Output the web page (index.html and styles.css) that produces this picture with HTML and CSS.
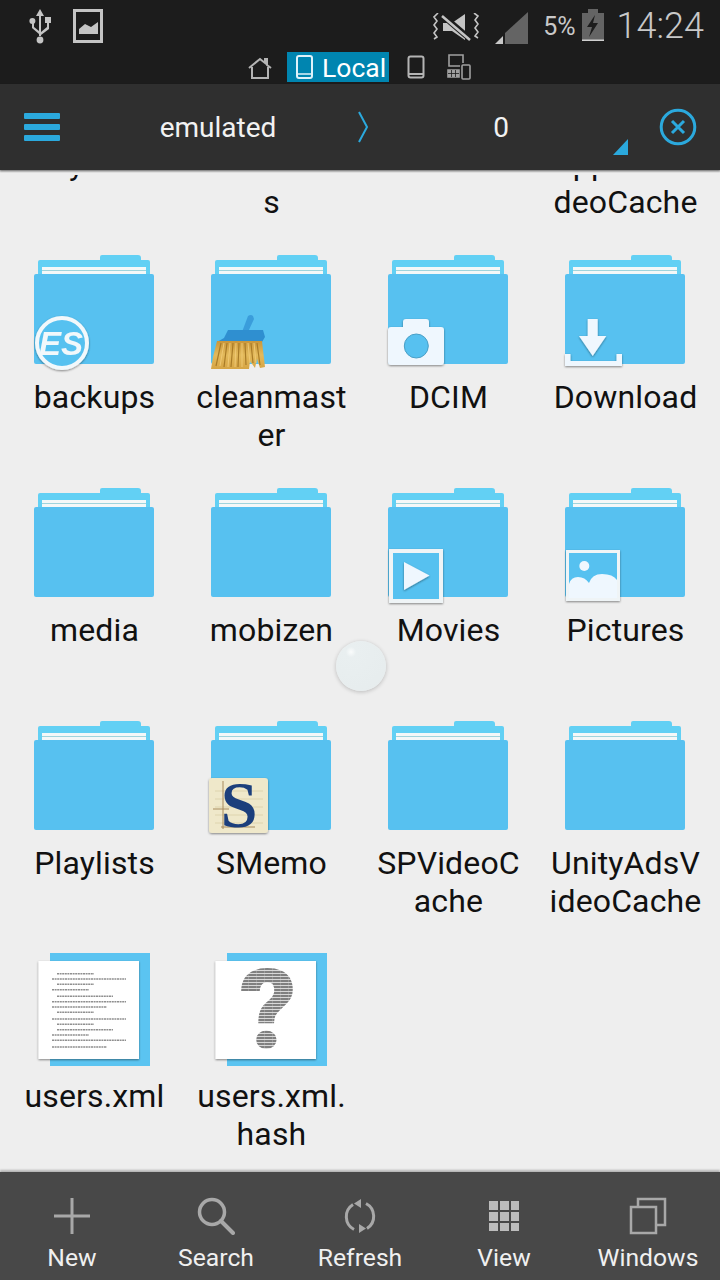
FILE: index.html
```html
<!DOCTYPE html>
<html lang="en">
<head>
  <meta charset="UTF-8">
  <meta name="viewport" content="width=device-width, initial-scale=1.0">
  <title>ES File Explorer</title>
  <link rel="stylesheet" href="styles.css">
</head>
<body>
  <!-- shared shapes -->
  <svg class="defs" width="0" height="0">
    <defs>
      <symbol id="folder" viewBox="0 0 120 110" overflow="visible">
        <path d="M4 19V7q0-2 2-2H66V2q0-2 2-2h36q3 0 3 3v2h7q2 0 2 2v12z" fill="#62d0f4"/>
        <rect x="8" y="12" width="104" height="7" fill="#f4f8f8"/>
        <rect x="8" y="15" width="104" height="1" fill="#9fd4dc"/>
        <rect x="0" y="19" width="120" height="90" rx="2" fill="#57c1f0"/>
      </symbol>
      <filter id="soft" x="-20%" y="-20%" width="140%" height="140%">
        <feDropShadow dx="0" dy="1" stdDeviation="1" flood-color="#000" flood-opacity=".45"/>
      </filter>
      <filter id="blur">
        <feGaussianBlur stdDeviation=".45"/>
      </filter>
      <linearGradient id="bristle" x1="0" y1="0" x2="0" y2="1">
        <stop offset="0" stop-color="#c9963a"/>
        <stop offset=".5" stop-color="#e3ba5c"/>
        <stop offset="1" stop-color="#d6a544"/>
      </linearGradient>
      <pattern id="stripes" width="8" height="3" patternUnits="userSpaceOnUse">
        <rect width="8" height="2" fill="#808080"/>
        <rect x="5" width=".6" height="2" fill="#a8a8a8"/>
        <rect y="2" width="8" height="1" fill="#d8d8d8"/>
      </pattern>
    </defs>
  </svg>

  <header class="status">
    <div class="status-top">
      <svg class="st-usb" width="22" height="36" viewBox="0 0 22 36" fill="#c4c4c4">
        <path d="M11 0l4 7h-3v20h-2V7H7z"/>
        <circle cx="11" cy="31" r="3.4"/>
        <circle cx="3.4" cy="12" r="3"/>
        <rect x="16" y="8" width="6" height="6"/>
        <path d="M3 14v5l7 6v-3l-5-4v-4zM18 13v5l-6 5v3l8-6v-7z"/>
      </svg>
      <svg class="st-pic" width="30" height="34" viewBox="0 0 30 34">
        <rect x="1.500" y="1.500" width="27" height="31" fill="#1c1c1c" stroke="#c4c4c4" stroke-width="3"/>
        <path d="M6 25v-5l6-5 6 3 7-5v12z" fill="#c4c4c4"/>
      </svg>
      <span class="spacer"></span>
      <svg class="st-vib" width="46" height="28" viewBox="0 0 46 28" fill="none">
        <path d="M5 0L1 4l3 4-3 4 3 4-3 4 3 4-3 2M41 0l4 3-3 4 3 4-3 4 3 4-3 4 3 2" stroke="#c4c4c4" stroke-width="1.600"/>
        <path d="M10 10h9L32 1v26L19 18h-9z" fill="#c4c4c4"/>
        <path d="M9 2l28 24" stroke="#1c1c1c" stroke-width="6"/>
        <path d="M9 3l28 24" stroke="#c4c4c4" stroke-width="2.500"/>
      </svg>
      <svg class="st-sig" width="33" height="32" viewBox="0 0 33 32">
        <path d="M10 32V21L33 0v32z" fill="#646464"/>
        <path d="M0 32l8-8v8z" fill="#c8c8c8"/>
      </svg>
      <span class="st-pct">5%</span>
      <svg class="st-bat" width="22" height="32" viewBox="0 0 22 32">
        <path d="M0 4h6V0h10v4h6v28H0z" fill="#646464"/>
        <rect y="30.500" width="22" height="1.500" fill="#d0d0d0"/>
        <path d="M13 6L5 18h5l-3 10 9-14h-5z" fill="#1c1c1c"/>
      </svg>
      <span class="st-time">14:24</span>
    </div>
    <div class="status-tabs">
      <svg class="tab-ico" width="24" height="22" viewBox="0 0 24 22" fill="none" stroke="#b4b4b4" stroke-width="2">
        <path d="M1 11L12 2l5 4V2h2v6l4 3M4 10v11h16V10"/>
      </svg>
      <div class="tab-active">
        <svg width="18" height="25" viewBox="0 0 18 25" fill="none" stroke="#dff2fa" stroke-width="2">
          <rect x="1" y="1" width="15" height="22" rx="2"/>
          <path d="M1 19h15" stroke-width="1.500"/>
        </svg>
        <span>Local</span>
      </div>
      <svg class="tab-ico" width="18" height="24" viewBox="0 0 18 24" fill="none" stroke="#b4b4b4" stroke-width="2">
        <rect x="1.500" y="1.500" width="15" height="21" rx="2"/>
        <path d="M2 19h14"/>
      </svg>
      <svg class="tab-ico" width="24" height="26" viewBox="0 0 24 26" fill="none" stroke="#a0a0a0" stroke-width="1.600">
        <path d="M13 12H2V1h14v8"/>
        <path d="M1 16h11v7H1z" fill="#a0a0a0"/>
        <path d="M4.500 16v7M8.500 16v7M1 19.500h11" stroke="#1c1c1c" stroke-width=".8"/>
        <rect x="15" y="11" width="8" height="14" rx="1"/>
      </svg>
    </div>
  </header>

  <nav class="pathbar">
    <div class="menu-btn"><span></span><span></span><span></span></div>
    <div class="crumb crumb-first">emulated</div>
    <svg class="chevron" width="12" height="32" viewBox="0 0 12 32" fill="none" stroke="#2ba9dd" stroke-width="2">
      <path d="M2 1l8 15-8 15"/>
    </svg>
    <div class="crumb crumb-last">0</div>
    <svg class="close-btn" width="38" height="38" viewBox="0 0 38 38" fill="none" stroke="#2ba9dd">
      <circle cx="19" cy="19" r="16.800" stroke-width="3"/>
      <path d="M13 13l12 12M25 13L13 25" stroke-width="3"/>
    </svg>
  </nav>

  <main class="files">
    <div class="grid">
      <div class="cell cell-ghost"><div class="ghost-icon"></div><div class="label">Mydata</div></div>
      <div class="cell cell-ghost"><div class="ghost-icon"></div><div class="label">Notification<br>s</div></div>
      <div class="cell cell-ghost"><div class="ghost-icon"></div></div>
      <div class="cell cell-ghost"><div class="ghost-icon"></div><div class="label">AppnextVi<br>deoCache</div></div>

      <div class="cell">
        <svg class="icon" viewBox="0 0 120 115" overflow="visible">
          <use href="#folder" width="120" height="110"/>
          <g filter="url(#soft)">
            <circle cx="28" cy="88" r="25" fill="#57c1f0" stroke="#f2f8fb" stroke-width="4"/>
            <text class="es-mark" x="27" y="100">ES</text>
          </g>
        </svg>
        <div class="label">backups</div>
      </div>
      <div class="cell">
        <svg class="icon" viewBox="0 0 120 115" overflow="visible">
          <use href="#folder" width="120" height="110"/>
          <path d="M37 61q3-2 5 0l1 3-6 13h-6z" fill="#3a9ddb"/>
          <path d="M13 83l4-8h35l2 7-3 5H6z" fill="#2f8fd0"/>
          <path d="M6 86h45l1 9 2 17-5 1-3-9-2 9-5-7-1 8-32 0H0l2-12z" fill="url(#bristle)"/>
          <path d="M10 88L5 111M16 88l-3 24M22 88l-2 24M28 88l-1 24M34 88l1 22M40 88l2 20M46 88l3 22" stroke="#a97b27" stroke-width="1.200" fill="none"/>
          <path d="M13 88l-4 23M19 88l-2 24M25 88l-1 24M31 88v24M37 88l2 20M43 88l2 20" stroke="#efc873" stroke-width="1" fill="none"/>
        </svg>
        <div class="label">cleanmast<br>er</div>
      </div>
      <div class="cell">
        <svg class="icon" viewBox="0 0 120 115" overflow="visible">
          <use href="#folder" width="120" height="110"/>
          <path d="M3 72h12v-5q0-3 3-3h20q3 0 3 3v5h12q3 0 3 3v32q0 3-3 3H3q-3 0-3-3V75q0-3 3-3z" fill="#eff7fe" filter="url(#soft)"/>
          <circle cx="28.300" cy="91" r="12" fill="#57c1f0" stroke="#4a9fc6" stroke-width="1"/>
        </svg>
        <div class="label">DCIM</div>
      </div>
      <div class="cell">
        <svg class="icon" viewBox="0 0 120 115" overflow="visible">
          <use href="#folder" width="120" height="110"/>
          <g fill="#eff7fe" filter="url(#soft)">
            <path d="M22.700 64h10v17h8.600l-13.600 20-13.700-20h8.700z"/>
            <path d="M0 99h5.500v7h46v-7h5.500v12H0z"/>
          </g>
        </svg>
        <div class="label">Download</div>
      </div>

      <div class="cell">
        <svg class="icon" viewBox="0 0 120 115" overflow="visible"><use href="#folder" width="120" height="110"/></svg>
        <div class="label">media</div>
      </div>
      <div class="cell">
        <svg class="icon" viewBox="0 0 120 115" overflow="visible"><use href="#folder" width="120" height="110"/></svg>
        <div class="label">mobizen</div>
      </div>
      <div class="cell">
        <svg class="icon" viewBox="0 0 120 115" overflow="visible">
          <use href="#folder" width="120" height="110"/>
          <rect x="3" y="63" width="50" height="50" fill="#57c1f0" stroke="#eff4f6" stroke-width="4" filter="url(#soft)"/>
          <path d="M16 74l25.500 13.500L16 102z" fill="#eff7fe" filter="url(#soft)"/>
        </svg>
        <div class="label">Movies</div>
      </div>
      <div class="cell">
        <svg class="icon" viewBox="0 0 120 115" overflow="visible">
          <use href="#folder" width="120" height="110"/>
          <rect x="2.500" y="63.500" width="51" height="48" fill="#57c1f0" stroke="#eff4f6" stroke-width="3" filter="url(#soft)"/>
          <circle cx="19.300" cy="78" r="5" fill="#eff7fe"/>
          <path d="M4 110V96q2-7 9-7 7 0 11 6 3-9 13-9 11 0 15 6v18z" fill="#eff7fe"/>
        </svg>
        <div class="label">Pictures</div>
      </div>

      <div class="cell">
        <svg class="icon" viewBox="0 0 120 115" overflow="visible"><use href="#folder" width="120" height="110"/></svg>
        <div class="label">Playlists</div>
      </div>
      <div class="cell">
        <svg class="icon" viewBox="0 0 120 115" overflow="visible">
          <use href="#folder" width="120" height="110"/>
          <rect x="-2" y="57" width="59" height="55" rx="3" fill="#efe8ca" filter="url(#soft)"/>
          <path d="M4 70h48M4 78h48M4 86h48M4 94h48M4 102h48" stroke="#ded4ae" stroke-width="1"/>
          <path d="M12 60v48M2 88h16M10 106h34" stroke="#a78a5c" stroke-width="1"/>
          <text class="smemo-mark" x="28" y="106">S</text>
        </svg>
        <div class="label">SMemo</div>
      </div>
      <div class="cell">
        <svg class="icon" viewBox="0 0 120 115" overflow="visible"><use href="#folder" width="120" height="110"/></svg>
        <div class="label">SPVideoC<br>ache</div>
      </div>
      <div class="cell">
        <svg class="icon" viewBox="0 0 120 115" overflow="visible"><use href="#folder" width="120" height="110"/></svg>
        <div class="label">UnityAdsV<br>ideoCache</div>
      </div>

      <div class="cell cell-file">
        <svg class="icon" viewBox="0 0 120 115" overflow="visible">
          <rect x="16" y="0" width="100" height="113" fill="#5bc4f1"/>
          <rect x="4.500" y="8" width="100.500" height="98" fill="#fff" filter="url(#soft)"/>
          <path class="doc-lines" filter="url(#blur)" d="M23 20.700H60M18 26H92M23 31.300H60M18 36.700H55M23 43.300H79M18 48.700H92M18 54H73M23 59.300H60M18 66H92M23 71.300H60M23 76.700H79M18 82H55M18 87.300H92M18 94H73"/>
        </svg>
        <div class="label">users.xml</div>
      </div>
      <div class="cell cell-file">
        <svg class="icon" viewBox="0 0 120 115" overflow="visible">
          <rect x="16" y="0" width="100" height="113" fill="#5bc4f1"/>
          <rect x="4.500" y="8" width="100.500" height="98" fill="#fff" filter="url(#soft)"/>
          <text class="question" x="57" y="95" filter="url(#blur)">?</text>
        </svg>
        <div class="label">users.xml.<br>hash</div>
      </div>
    </div>
    <div class="bubble"></div>
  </main>

  <footer class="toolbar">
    <div class="tool">
      <svg width="38" height="38" viewBox="0 0 38 38" stroke="#a8a8a8" stroke-width="3" fill="none">
        <path d="M19 1v36M1 19h36"/>
      </svg>
      <span>New</span>
    </div>
    <div class="tool">
      <svg width="38" height="38" viewBox="0 0 38 38" stroke="#a8a8a8" fill="none">
        <circle cx="15" cy="15" r="12.500" stroke-width="3.500"/>
        <path d="M24 24l12 12" stroke-width="4" stroke-linecap="round"/>
      </svg>
      <span>Search</span>
    </div>
    <div class="tool">
      <svg width="38" height="38" viewBox="0 0 38 38" stroke="#a8a8a8" stroke-width="3" fill="none">
        <path d="M12 7.500A14.500 14.500 0 0 0 13 32.500"/>
        <path d="M26 31.500A14.500 14.500 0 0 0 25 6.500"/>
        <path d="M20 2v9l-7-4.500zM18 36v-9l7 4.500z" fill="#a8a8a8" stroke="none"/>
      </svg>
      <span>Refresh</span>
    </div>
    <div class="tool">
      <svg width="38" height="38" viewBox="0 0 38 38" fill="#bcbcbc">
        <path d="M4 4h9v9H4zM15 4h9v9h-9zM26 4h8v9h-8zM4 15h9v9H4zM15 15h9v9h-9zM26 15h8v9h-8zM4 26h9v8H4zM15 26h9v8h-9zM26 26h8v8h-8z"/>
      </svg>
      <span>View</span>
    </div>
    <div class="tool">
      <svg width="38" height="38" viewBox="0 0 38 38" stroke="#a8a8a8" stroke-width="2.500" fill="none">
        <rect x="2" y="10" width="25" height="26"/>
        <path d="M9 9V2h27v26h-8"/>
      </svg>
      <span>Windows</span>
    </div>
  </footer>
</body>
</html>
```

FILE: styles.css
```css
* {
  margin: 0;
  padding: 0;
  box-sizing: border-box;
}

html, body {
  width: 720px;
  height: 1280px;
  overflow: hidden;
}

body {
  font-family: Roboto, 'Noto Sans', sans-serif;
  background: #eeeeee;
  display: flex;
  flex-direction: column;
}

.defs {
  position: absolute;
}

/* Status bar + location tabs */
.status {
  height: 84px;
  background: #1c1c1c;
  flex: none;
}

.status-top {
  height: 52px;
  display: flex;
  align-items: flex-start;
  padding-left: 29px;
  color: #c8c8c8;
}

.spacer {
  flex: 1;
}

.st-usb {
  margin-top: 9px;
}

.st-pic {
  margin: 9px 0 0 22px;
}

.st-vib {
  margin-top: 13px;
}

.st-sig {
  margin: 12px 0 0 16px;
}

.st-pct {
  margin: 13px 0 0 15px;
  font-size: 25px;
  line-height: 28px;
}

.st-bat {
  margin: 9px 0 0 6px;
}

.st-time {
  margin: 4px 16px 0 13px;
  font-size: 36px;
  line-height: 44px;
  font-weight: 300;
}

.status-tabs {
  height: 32px;
  display: flex;
  align-items: flex-start;
  padding-left: 248px;
}

.status-tabs .tab-ico:first-child {
  margin-top: 5px;
}

.status-tabs .tab-ico:nth-child(3) {
  margin: 3px 0 0 18px;
}

.status-tabs .tab-ico:nth-child(4) {
  margin: 2px 0 0 22px;
}

.tab-active {
  width: 102px;
  height: 30px;
  margin-left: 15px;
  background: #0085b0;
  display: flex;
  align-items: center;
  gap: 8px;
  padding-left: 9px;
  color: #fff;
  font-size: 26.5px;
}

/* Path bar */
.pathbar {
  height: 86px;
  background: #2f2f2f;
  flex: none;
  display: flex;
  align-items: center;
  position: relative;
  z-index: 2;
  box-shadow: 0 1px 2px rgba(0, 0, 0, 0.45);
}

.menu-btn {
  width: 84px;
  padding-left: 24px;
  display: flex;
  flex-direction: column;
  gap: 5px;
}

.menu-btn span {
  width: 36px;
  height: 6px;
  border-radius: 1px;
  background: #2ba9dd;
}

.crumb {
  color: #f2f2f2;
  font-size: 28px;
  text-align: center;
}

.crumb-first {
  width: 268px;
}

.chevron {
  margin: 0 5px;
}

.crumb-last {
  width: 254px;
  position: relative;
}

/* little corner mark of the path dropdown */
.crumb-last::after {
  content: '';
  position: absolute;
  right: 0;
  top: 28px;
  border-style: solid;
  border-width: 0 0 16px 15px;
  border-color: transparent transparent #2ba9dd transparent;
}

.close-btn {
  margin-left: 31px;
}

/* File grid */
.files {
  flex: 1;
  overflow: hidden;
  position: relative;
}

/* strip under the path bar that the list scrolls beneath */
.files::before {
  content: '';
  position: absolute;
  top: 0;
  left: 0;
  right: 0;
  height: 5px;
  z-index: 1;
  background: linear-gradient(#c4c4c4, #eeeeee 60%);
}

.grid {
  margin-top: -148px;
  padding: 0 6px;
  display: grid;
  grid-template-columns: repeat(4, 177px);
  grid-auto-rows: 233px;
}

.cell {
  display: flex;
  flex-direction: column;
  align-items: center;
}

.icon {
  width: 120px;
  height: 115px;
  margin-right: 1px;
  display: block;
  overflow: visible;
  flex: none;
}

.cell-file .icon {
  margin-top: -1px;
  margin-bottom: 1px;
}

.ghost-icon {
  height: 115px;
  flex: none;
}

.label {
  margin-top: 8px;
  font-size: 32px;
  letter-spacing: 0.15px;
  line-height: 38px;
  color: #111;
  text-align: center;
  white-space: nowrap;
}

.es-mark {
  font-family: 'Liberation Sans', sans-serif;
  font-size: 33px;
  font-weight: 700;
  font-style: italic;
  fill: #f2f8fb;
  text-anchor: middle;
}

.smemo-mark {
  font-family: 'Liberation Serif', serif;
  font-size: 66px;
  font-weight: 700;
  fill: #1c3f7c;
  text-anchor: middle;
}

.doc-lines {
  fill: none;
  stroke: #8f8f8f;
  stroke-width: 1.6;
  stroke-dasharray: 2 .6;
}

.question {
  font-family: Roboto, sans-serif;
  font-size: 112px;
  font-weight: 900;
  fill: url(#stripes);
  text-anchor: middle;
}

/* Floating handle over the list */
.bubble {
  position: absolute;
  left: 336px;
  top: 471px;
  width: 50px;
  height: 50px;
  border-radius: 50%;
  background: radial-gradient(circle at 30% 22%, #fafcfc 0, #e9eff0 10%, #e6eced 100%);
  box-shadow: 0 1px 4px rgba(0, 0, 0, 0.22);
}

/* Bottom toolbar */
.toolbar {
  height: 108px;
  background: #484848;
  flex: none;
  display: grid;
  grid-template-columns: repeat(5, 144px);
  box-shadow: 0 -2px 2px rgba(0, 0, 0, 0.25);
  position: relative;
}

.tool {
  display: flex;
  flex-direction: column;
  align-items: center;
  padding-top: 25px;
  gap: 6px;
  color: #f0f0f0;
  font-size: 24.7px;
  line-height: 34px;
}
```
